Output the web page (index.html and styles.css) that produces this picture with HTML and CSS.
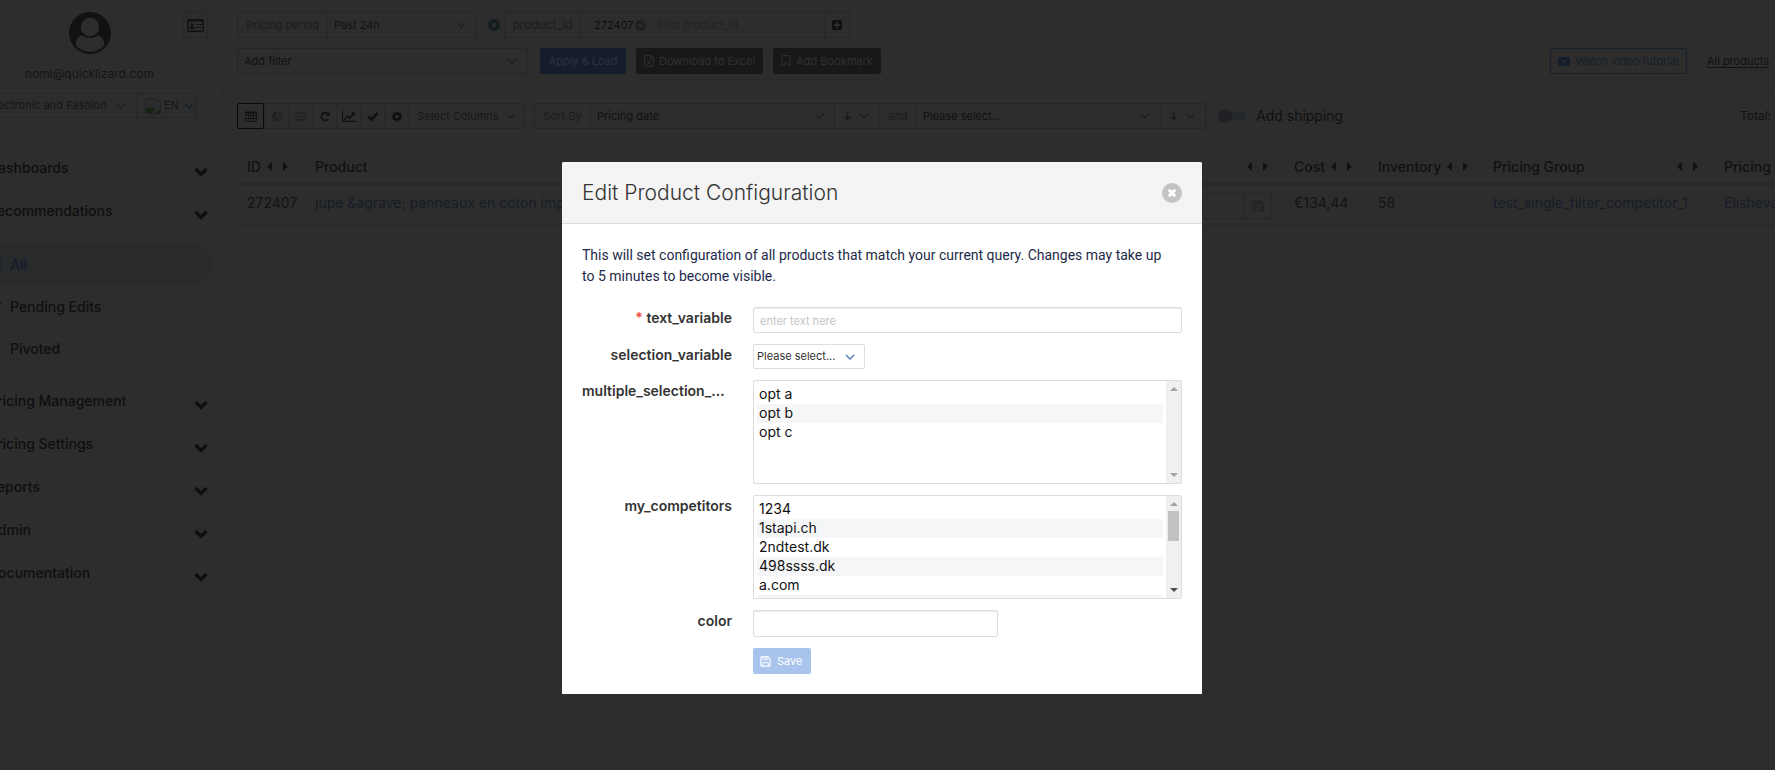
FILE: index.html
```html
<!DOCTYPE html>
<html lang="en">
<head>
<meta charset="utf-8">
<title>Edit Product Configuration</title>
<link rel="stylesheet" href="styles.css">
</head>
<body>
<svg class="sprite" aria-hidden="true">
  <symbol id="i-chev" viewBox="0 0 14 10"><path d="M1.500 2 7 7.500 12.500 2" fill="none" stroke="currentColor" stroke-width="3.200"/></symbol>
  <symbol id="i-thin" viewBox="0 0 10 6"><path d="M1 1l4 4 4-4" fill="none" stroke="currentColor" stroke-width="1.300"/></symbol>
  <symbol id="i-x" viewBox="0 0 20 20"><path d="M10 0a10 10 0 1 0 0 20 10 10 0 0 0 0-20z" fill="currentColor"/><path class="cross" d="M6.800 6.800l6.400 6.400M13.200 6.800l-6.400 6.400" fill="none" stroke-width="3"/></symbol>
  <symbol id="i-left" viewBox="0 0 5 9"><path d="M5 0v9L0 4.500z" fill="currentColor"/></symbol>
  <symbol id="i-right" viewBox="0 0 5 9"><path d="M0 0v9l5-4.500z" fill="currentColor"/></symbol>
  <symbol id="i-save" viewBox="0 0 12 12"><path d="M1.600 1h7L11 3.400v7a.6.6 0 0 1-.6.6H1.600a.6.6 0 0 1-.6-.6V1.600A.6.6 0 0 1 1.600 1z" fill="none" stroke="currentColor" stroke-width="1.200"/><path d="M3.500 1v3.200h4.200V1M3 11V7.300h6V11" fill="none" stroke="currentColor"/><path d="M6 1.500h1.200V3.500H6z" fill="currentColor"/></symbol>
</svg>

<div class="page">
  <aside class="sidebar">
    <header class="profile">
      <svg class="avatar" viewBox="0 0 42 42"><circle cx="21" cy="21" r="21" fill="currentColor"/><circle class="cut" cx="21" cy="15" r="9.200"/><path class="cut" d="M6.500 33c.5-6 3-9 6.500-9.800 5 3.800 11 3.800 16 0 3.500.8 6 3.800 6.500 9.800-3.500 4.200-9 6.800-14.500 6.800S10 37.200 6.500 33z"/></svg>
      <button class="card-btn" aria-label="Account card"><svg viewBox="0 0 17 13"><rect x=".75" y=".75" width="15.500" height="11.500" rx="1" fill="none" stroke="currentColor" stroke-width="1.500"/><path d="M.5 1h16v1.500H.5z" fill="currentColor"/><circle cx="5" cy="5.500" r="1.600" fill="currentColor"/><path d="M2.500 10c0-2 1-2.800 2.500-2.800S7.500 8 7.500 10z" fill="currentColor"/><path d="M9 5.500h2.500m.8 0h2.500M9 8.500h2.500m.8 0h2.500" stroke="currentColor"/></svg></button>
      <p class="email">nomi@quicklizard.com</p>
      <div class="switches">
        <select class="store" aria-label="Store"><option>Electronic and Fashion</option></select>
        <button class="lang"><svg class="broken" viewBox="0 0 16 16"><path class="sky" d="M.5.500h11l4 4v11H.5z"/><path class="hill" d="M1 15v-3c3-3 7-3 9-1l-3 4zM11 15l4-4v4z"/></svg>EN<svg class="thin"><use href="#i-thin"/></svg></button>
      </div>
    </header>
    <nav class="nav">
      <a href="#">Dashboards<svg><use href="#i-chev"/></svg></a>
      <a href="#">Recommendations<svg><use href="#i-chev"/></svg></a>
      <div class="sub">
        <a class="on" href="#"><svg viewBox="0 0 10 10"><path d="M0 1h10M0 3.500h10M0 6h10M0 8.500h10" stroke="currentColor" stroke-width="1.500"/></svg>All</a>
        <a href="#"><svg viewBox="0 0 10 10"><path d="M0 8l5-5 2 2 3-3" fill="none" stroke="currentColor" stroke-width="1.500"/></svg>Pending Edits</a>
        <a href="#"><svg viewBox="0 0 10 10"><path d="M0 5h9" stroke="currentColor"/></svg>Pivoted</a>
      </div>
      <a href="#">Pricing Management<svg><use href="#i-chev"/></svg></a>
      <a href="#">Pricing Settings<svg><use href="#i-chev"/></svg></a>
      <a href="#">Reports<svg><use href="#i-chev"/></svg></a>
      <a href="#">Admin<svg><use href="#i-chev"/></svg></a>
      <a href="#">Documentation<svg><use href="#i-chev"/></svg></a>
    </nav>
  </aside>

  <main class="main">
    <section class="filters">
      <div class="row">
        <div class="group period"><label class="addon" for="period">Pricing period</label><select id="period"><option>Past 24h</option></select></div>
        <button class="remove" aria-label="Remove filter"><svg><use href="#i-x"/></svg></button>
        <div class="group product">
          <label class="addon" for="pid">product_id</label>
          <div class="tags"><span class="tag">272407<svg><use href="#i-x"/></svg></span><input id="pid" placeholder="Find product_id"></div>
          <button class="plus" aria-label="Add value"><svg viewBox="0 0 10 10"><rect width="10" height="10" rx="2" fill="currentColor"/><path class="knock" d="M5 2v6M2 5h6" stroke-width="1.800"/></svg></button>
        </div>
      </div>
      <div class="row">
        <select class="boxed add" aria-label="Add filter"><option>Add filter</option></select>
        <button class="btn apply">Apply &amp; Load</button>
        <button class="btn dark"><svg viewBox="0 0 10 12"><path d="M.6.600h6L9.400 3.500v7.900H.6zM6.500.600v3h3" fill="none" stroke="currentColor"/><path d="M3 5l4 5M7 5l-4 5" stroke="currentColor"/></svg>Download to Excel</button>
        <button class="btn dark"><svg viewBox="0 0 10 12"><path d="M1 .6h8v10.500L5 8l-4 3.100z" fill="none" stroke="currentColor"/></svg>Add Bookmark</button>
        <span class="grow"></span>
        <button class="btn video"><svg viewBox="0 0 12 9"><rect width="12" height="9" rx="2" fill="currentColor"/><path class="cut" d="M4.700 2.500v4L8 4.500z"/></svg>Watch video tutorial</button>
        <a class="all" href="#">All products</a>
      </div>
    </section>

    <section class="tools">
      <div class="group icons">
        <button class="sel" aria-label="Table"><svg viewBox="0 0 12 11"><path d="M.5 1.500h11v9H.5zM.5 4.500h11M.5 7.500h11M3.500 1.500v9M8.500 1.500v9M6 1.500v9" fill="none" stroke="currentColor" stroke-width=".8"/><path d="M0 .5h12v2H0z" fill="currentColor"/></svg></button>
        <button class="dim" aria-label="Globe"><svg viewBox="0 0 12 12"><circle cx="6" cy="6" r="5.500" fill="currentColor"/><path class="cut" d="M6 1.500l3 .5-1 2-1.500.5L8 6l2-1 .5 2L8 10l-.5-2.500-2-1.500L5 3zM1.500 5l2 2v2.500z"/></svg></button>
        <button class="dim" aria-label="Sliders"><svg viewBox="0 0 12 10"><path d="M0 1.500h12M0 5h12M0 8.500h12" stroke="currentColor" fill="none"/><path d="M3 0h2v3H3zM8 3.500h2v3H8zM4 7h2v3H4z" fill="currentColor"/></svg></button>
        <button aria-label="Refresh"><svg viewBox="0 0 12 12"><path d="M9.500 8.800a4.200 4.200 0 1 1-.5-6" fill="none" stroke="currentColor" stroke-width="2"/><path d="M11 .5v4.800H6.200z" fill="currentColor"/></svg></button>
        <button aria-label="Chart"><svg class="wide" viewBox="0 0 14 11"><path d="M.6 0v10.400H14" fill="none" stroke="currentColor" stroke-width="1.200"/><path d="M2.500 8.500l3-3.500 2.200 2 4-4.500" fill="none" stroke="currentColor" stroke-width="1.800"/><path d="M9 .8h4v4z" fill="currentColor"/></svg></button>
        <button aria-label="Approve"><svg viewBox="0 0 12 10"><path d="M1.500 5l3 3 6-6.500" fill="none" stroke="currentColor" stroke-width="2.600"/></svg></button>
        <button aria-label="Settings"><svg viewBox="0 0 12 12"><circle cx="6" cy="6" r="3.200" fill="none" stroke="currentColor" stroke-width="2.400"/><path d="M6 .5v2M6 9.500v2M.5 6h2M9.500 6h2M2.100 2.100l1.400 1.400M8.500 8.500l1.400 1.400M9.900 2.100L8.500 3.500M3.500 8.500L2.100 9.900" stroke="currentColor" stroke-width="2.200"/></svg></button>
        <button class="cols">Select Columns<svg class="thin"><use href="#i-thin"/></svg></button>
      </div>
      <div class="group sort">
        <label class="addon" for="s1">Sort By</label><select class="by" id="s1"><option>Pricing date</option></select><select class="dir" aria-label="Direction"><option>↓</option></select>
        <label class="addon" for="s2">and</label><select class="by" id="s2"><option>Please select...</option></select><select class="dir" aria-label="Second direction"><option>↓</option></select>
      </div>
      <label class="toggle"><input type="checkbox">Add shipping</label>
      <span class="grow"></span>
      <span class="total">Total:</span>
    </section>

    <table class="grid">
      <colgroup><col class="c-id"><col><col class="c-conf"><col class="c-cost"><col class="c-inv"><col class="c-group"><col class="c-set"></colgroup>
      <thead><tr>
        <th><div class="th">ID<span class="mv"><svg><use href="#i-left"/></svg><svg><use href="#i-right"/></svg></span></div></th>
        <th>Product</th>
        <th><div class="th end"><span class="mv"><svg><use href="#i-left"/></svg><svg><use href="#i-right"/></svg></span></div></th>
        <th><div class="th">Cost<span class="mv"><svg><use href="#i-left"/></svg><svg><use href="#i-right"/></svg></span></div></th>
        <th><div class="th">Inventory<span class="mv"><svg><use href="#i-left"/></svg><svg><use href="#i-right"/></svg></span></div></th>
        <th><div class="th far">Pricing Group<span class="mv"><svg><use href="#i-left"/></svg><svg><use href="#i-right"/></svg></span></div></th>
        <th>Pricing S</th>
      </tr></thead>
      <tbody><tr>
        <td>272407</td>
        <td><a href="#">jupe &amp;agrave; panneaux en coton impr</a></td>
        <td><div class="price"><input aria-label="Price"><button aria-label="Save price"><svg><use href="#i-save"/></svg></button></div></td>
        <td>€134,44</td>
        <td>58</td>
        <td><a href="#">test_single_filter_competitor_1</a></td>
        <td><a href="#">Elisheva</a></td>
      </tr></tbody>
    </table>
  </main>
</div>

<div class="overlay">
  <div class="modal" role="dialog" aria-modal="true" aria-labelledby="title">
    <header class="modal-head">
      <h1 id="title">Edit Product Configuration</h1>
      <button class="close" aria-label="Close"><svg><use href="#i-x"/></svg></button>
    </header>
    <form class="modal-body">
      <p>This will set configuration of all products that match your current query. Changes may take up to 5 minutes to become visible.</p>
      <div class="field"><label for="f1"><span class="req">*</span> text_variable</label><input id="f1" class="text" placeholder="enter text here"></div>
      <div class="field"><label for="f2">selection_variable</label><select id="f2" class="pick"><option>Please select...</option></select></div>
      <div class="field">
        <label class="cut-off" for="f3">multiple_selection_…</label>
        <div class="listbox">
          <select id="f3" multiple><option>opt a</option><option>opt b</option><option>opt c</option></select>
          <div class="bar" aria-hidden="true"><i class="up"></i><i class="down"></i></div>
        </div>
      </div>
      <div class="field">
        <label for="f4">my_competitors</label>
        <div class="listbox">
          <select id="f4" multiple><option>1234</option><option>1stapi.ch</option><option>2ndtest.dk</option><option>498ssss.dk</option><option>a.com</option><option></option></select>
          <div class="bar" aria-hidden="true"><i class="up"></i><i class="thumb"></i><i class="down more"></i></div>
        </div>
      </div>
      <div class="field"><label for="f5">color</label><input id="f5" class="text color"></div>
      <div class="field"><span></span><button class="save" type="button"><svg><use href="#i-save"/></svg>Save</button></div>
    </form>
  </div>
</div>
</body>
</html>
```
FILE: styles.css
```css
* { box-sizing: border-box; }
html, body { height: 100%; }
body {
  margin: 0;
  overflow: hidden;
  background: #2d2d2d;
  color: #111;
  font: 14px/21px Inter, "Liberation Sans", sans-serif;
}
button, input, select { margin: 0; padding: 0; border: 0; border-radius: 0; background: none; font: inherit; color: inherit; outline: 0; }
a { color: inherit; text-decoration: none; }
svg { flex: none; display: block; }
select { appearance: none; }
.sprite { position: absolute; width: 0; height: 0; }
.knock { stroke: #2d2d2d; }
.cross { stroke: var(--cross, #2d2d2d); }
.cut { fill: #2d2d2d; }
.grow { flex: 1; }
.thin { width: 10px; height: 6px; }

.page { display: flex; min-height: 100%; }

/* sidebar */
.sidebar { flex: none; width: 266px; margin-left: -43px; border-right: 1px solid #292929; }
.profile { position: relative; display: flex; flex-direction: column; align-items: center; padding: 12px 0 14px; border-bottom: 1px solid #292929; }
.avatar { width: 42px; height: 42px; color: #121212; }
.card-btn { position: absolute; top: 12px; right: 14px; width: 25px; height: 26px; display: grid; place-items: center; border: 1px solid #262626; border-radius: 2px; }
.card-btn svg { width: 17px; height: 13px; }
.email { margin: 9px 0; font-size: 12px; color: #151515; }
.switches { display: flex; align-self: stretch; padding-right: 26px; font-size: 11px; line-height: 23px; color: #151515; }
.store, .lang { border: 1px solid #262626; height: 25px; }
.store { flex: 1; padding-left: 31px; background: url("data:image/svg+xml,%3Csvg xmlns='http://www.w3.org/2000/svg' width='10' height='6'%3E%3Cpath d='M1 1l4 4 4-4' fill='none' stroke='%231a1f26' stroke-width='1.300'/%3E%3C/svg%3E") no-repeat right 10px center; }
.lang { width: 60px; margin-left: -1px; display: flex; align-items: center; gap: 3px; padding-left: 8px; }
.lang .thin { color: #142128; margin-left: 2px; }
.broken { width: 16px; height: 16px; }
.sky { fill: #2a2c2e; stroke: #222; }
.hill { fill: #16240f; }
.nav { padding: 13px 14px 0 31px; font-weight: 500; color: #0f0f0f; }
.nav > a { display: flex; justify-content: space-between; align-items: center; height: 43px; }
.nav > a svg { width: 14px; height: 10px; margin-top: 8px; }
.sub { margin: 11px -4px 10px -21px; }
.sub a { display: flex; align-items: center; gap: 9px; height: 42px; padding-left: 24px; border-radius: 21px; }
.sub svg { width: 10px; height: 10px; }
.sub .on { background: #282a2c; color: #151c2c; }

/* filters */
.main { flex: 1; min-width: 0; overflow: hidden; font-size: 11px; line-height: 16px; }
.filters { display: grid; gap: 10px; padding: 12px 6px 14px 14px; border-bottom: 1px solid #292929; }
.row { display: flex; align-items: center; height: 26px; }
.group { display: flex; height: 26px; border: 1px solid #262626; border-radius: 2px; }
.group > * + * { border-left: 1px solid #262626; }
.addon { display: flex; align-items: center; justify-content: center; color: #1c1c1c; }
.main select { background: url("data:image/svg+xml,%3Csvg xmlns='http://www.w3.org/2000/svg' width='10' height='6'%3E%3Cpath d='M1 1l4 4 4-4' fill='none' stroke='%231a1f26' stroke-width='1.300'/%3E%3C/svg%3E") no-repeat right 10px center; }
.main .boxed { height: 26px; border: 1px solid #262626; border-radius: 2px; }
.period { width: 240px; }
.period .addon { width: 89px; }
.period select { flex: 1; padding-left: 6px; }
.remove { width: 12px; height: 12px; margin: 0 4px 0 11px; color: #151c20; }
.remove svg { width: 12px; height: 12px; }
.product { width: 346px; }
.product .addon { width: 75px; font-size: 12px; }
.tags { flex: 1; display: flex; align-items: center; padding-left: 13px; }
.tag { display: flex; align-items: center; gap: 1px; color: #0d0d0d; }
.tag svg { width: 11px; height: 11px; color: #202020; }
.tags input { width: 150px; margin-left: 12px; }
.tags input::placeholder { color: #232323; opacity: 1; }
.plus { width: 25px; display: grid; place-items: center; }
.plus svg { width: 10px; height: 10px; }
.add { width: 291px; margin-right: 2px; padding-left: 6px; }
.btn { display: flex; align-items: center; justify-content: center; gap: 5px; height: 26px; margin-left: 10px; padding: 0 8px; border-radius: 2px; white-space: nowrap; }
.btn svg { width: 10px; height: 12px; }
.apply { width: 86px; background: #151d2c; color: #2b323d; }
.dark { background: #181818; color: #303030; }
.video { border: 1px solid #15202d; padding: 0 7px; color: #151e2a; }
.btn.video svg { width: 12px; height: 9px; }
.all { margin-left: 20px; text-decoration: underline; text-underline-offset: 2px; }

/* toolbar */
.tools { display: flex; align-items: center; padding: 14px 4px 0 14px; }
.icons button { width: 24px; display: grid; place-items: center; }
.icons svg { width: 12px; height: 11px; }
.icons svg.wide { width: 14px; }
.icons button.sel { margin: -1px 0 -1px -1px; width: 27px; border: 1px solid #0a0a0a; border-radius: 2px; }
.icons .dim { color: #212121; }
.icons button.cols { display: flex; align-items: center; justify-content: center; gap: 8px; width: 115px; color: #181818; }
.icons svg.thin { width: 8px; height: 5px; }
.sort { margin: 0 12px 0 10px; }
.sort .addon { width: 55px; }
.sort .addon ~ .addon { width: 37px; }
.by { width: 244px; padding-left: 6px; }
.dir { width: 45px; padding-left: 8px; }
.toggle { display: flex; align-items: center; gap: 10px; font-size: 14px; }
.toggle input { appearance: none; position: relative; width: 28px; height: 8px; border-radius: 4px; background: #25282a; }
.toggle input::before { content: ""; position: absolute; left: 0; top: -3px; width: 14px; height: 14px; border-radius: 50%; background: #1e2023; }
.total { font-size: 12px; }

/* product table */
.grid { table-layout: fixed; width: calc(100% + 25px); margin: 21px 0 0 14px; border-collapse: collapse; font-size: 14px; line-height: 20px; }
.grid th, .grid td { padding: 0 10px; text-align: left; white-space: nowrap; font-weight: 400; border-bottom: 1px solid #272727; }
.grid th { height: 34px; font-weight: 500; border-bottom-width: 2px; }
.grid td { height: 41px; padding-top: 8px; vertical-align: top; color: #141414; }
.grid td a { color: #171c28; }
.c-id { width: 68px; }
.c-conf { width: 300px; }
.c-cost { width: 84px; }
.c-inv { width: 115px; }
.c-group { width: 231px; }
.c-set { width: 100px; }
.th { display: flex; align-items: center; gap: 6px; }
.th.far { justify-content: space-between; padding-right: 6px; }
.th.end { justify-content: flex-end; padding-right: 6px; }
.mv { display: flex; gap: 11px; }
.mv svg { width: 5px; height: 9px; }
.price { display: flex; height: 26px; margin-right: 2px; border: 1px solid #272727; }
.price input { flex: 1; min-width: 0; }
.price button { width: 27px; display: grid; place-items: center; border-left: 1px solid #272727; color: #202020; }
.price svg { width: 12px; height: 12px; }

/* modal */
.overlay { position: absolute; inset: 0; display: flex; justify-content: center; align-items: flex-start; padding: 162px 11px 0 0; }
.modal { width: 640px; background: #fff; color: #333; border-radius: 2px 2px 0 0; overflow: hidden; }
.modal-head { display: flex; align-items: center; justify-content: space-between; height: 62px; padding: 0 20px; background: #f4f4f4; border-bottom: 1px solid #ddd; }
.modal-head h1 { margin: 0; font-size: 21px; line-height: 28px; font-weight: 300; }
.close { --cross: #fff; width: 20px; height: 20px; color: #c4c4c4; }
.close svg { width: 20px; height: 20px; }
.modal-body { display: grid; gap: 11px; padding: 21px 20px 20px; }
.modal-body p { margin: 0 0 9px; padding-right: 12px; font-family: Roboto, Inter, sans-serif; color: #1d2a4a; }
.field { display: grid; grid-template-columns: 150px 1fr; gap: 21px; align-items: start; justify-items: start; }
.field label { justify-self: end; font-weight: 600; }
.field .cut-off { justify-self: start; white-space: nowrap; }
.req { color: #ef4a3c; }
.text { width: 100%; height: 26px; padding: 2px 6px 0; border: 1px solid #ddd; border-radius: 2px; box-shadow: inset 0 1px 1px #ececec; font-size: 11px; }
.text::placeholder { color: #c4c4c4; opacity: 1; }
.color { width: 245px; height: 27px; }
.pick { width: 112px; height: 25px; padding-left: 3px; border: 1px solid #ddd; border-radius: 2px; font-size: 11px; background: url("data:image/svg+xml,%3Csvg xmlns='http://www.w3.org/2000/svg' width='10' height='6'%3E%3Cpath d='M1 1l4 4 4-4' fill='none' stroke='%234f74b8' stroke-width='1.300'/%3E%3C/svg%3E") no-repeat right 9px center; }
.listbox { display: flex; width: 100%; height: 104px; border: 1px solid #ddd; border-radius: 2px; }
.listbox select { flex: 1; height: 100%; padding: 4px 3px 0; overflow: hidden; color: #111; }
.listbox option { height: 19px; min-height: 19px; padding: 0 2px; line-height: 19px; }
.listbox option:nth-child(even) { background: #f5f6f8; }
.bar { display: flex; flex-direction: column; align-items: center; width: 15px; padding: 6px 0; background: #f0f0f0; }
.up, .down { width: 0; height: 0; border: 0 solid transparent; border-left-width: 4px; border-right-width: 4px; }
.up { border-bottom: 4px solid #a3a3a3; }
.down { margin-top: auto; border-top: 4px solid #a3a3a3; }
.down.more { border-top-color: #505050; }
.thumb { width: 11px; height: 30px; margin-top: 5px; background: #c1c1c1; }
.save { display: flex; align-items: center; gap: 6px; height: 26px; padding: 0 9px 0 7px; border-radius: 2px; background: #a9c4ec; color: #fff; font-size: 11px; }
.save svg { width: 11px; height: 11px; }
```
